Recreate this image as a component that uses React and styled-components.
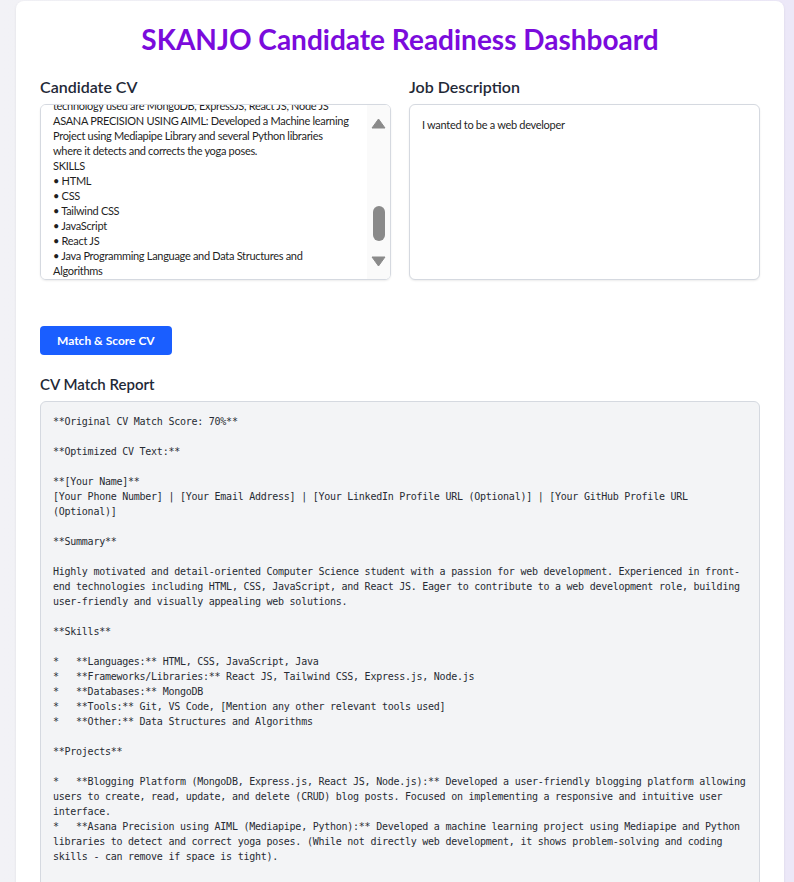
import React, { useLayoutEffect, useRef } from "react";
import styled, { createGlobalStyle } from "styled-components";

const cvText = [
  "ANANYA R",
  "Computer Science Student",
  "ananya.r@example.com",
  "+91 98765 43210",
  "Chennai, India",
  "CAREER OBJECTIVE",
  "Aspiring web developer eager to build",
  "responsive and user-friendly applications.",
  "EDUCATION",
  "B.E. Computer Science and Engineering",
  "ABC College of Engineering",
  "2021 - 2025",
  "CGPA: 8.4",
  "Higher Secondary Certificate",
  "XYZ Matriculation School",
  "Percentage: 91%",
  "INTERNSHIPS",
  "Web Development Intern - Tech Solutions",
  "Built landing pages using HTML, CSS",
  "and JavaScript for client projects.",
  "PROJECTS",
  "BLOGGING PLATFORM: Developed a blogging",
  "platform where users can create, read,",
  "update and delete their blog posts, the",
  "technology used are MongoDB, ExpressJS, React JS, Node JS",
  "ASANA PRECISION USING AIML: Developed a Machine learning",
  "Project using Mediapipe Library and several Python libraries",
  "where it detects and corrects the yoga poses.",
  "SKILLS",
  "\u2022 HTML",
  "\u2022 CSS",
  "\u2022 Tailwind CSS",
  "\u2022 JavaScript",
  "\u2022 React JS",
  "\u2022 Java Programming Language and Data Structures and",
  "Algorithms",
  "\u2022 MongoDB",
  "\u2022 Git and GitHub",
  "\u2022 VS Code",
  "LANGUAGES",
  "English, Tamil",
].join("\n");

const report = [
  "**Original CV Match Score: 70%**",
  "",
  "**Optimized CV Text:**",
  "",
  "**[Your Name]**",
  "[Your Phone Number] | [Your Email Address] | [Your LinkedIn Profile URL (Optional)] | [Your GitHub Profile URL",
  "(Optional)]",
  "",
  "**Summary**",
  "",
  "Highly motivated and detail-oriented Computer Science student with a passion for web development. Experienced in front-",
  "end technologies including HTML, CSS, JavaScript, and React JS. Eager to contribute to a web development role, building",
  "user-friendly and visually appealing web solutions.",
  "",
  "**Skills**",
  "",
  "*   **Languages:** HTML, CSS, JavaScript, Java",
  "*   **Frameworks/Libraries:** React JS, Tailwind CSS, Express.js, Node.js",
  "*   **Databases:** MongoDB",
  "*   **Tools:** Git, VS Code, [Mention any other relevant tools used]",
  "*   **Other:** Data Structures and Algorithms",
  "",
  "**Projects**",
  "",
  "*   **Blogging Platform (MongoDB, Express.js, React JS, Node.js):** Developed a user-friendly blogging platform allowing",
  "users to create, read, update, and delete (CRUD) blog posts. Focused on implementing a responsive and intuitive user",
  "interface.",
  "*   **Asana Precision using AIML (Mediapipe, Python):** Developed a machine learning project using Mediapipe and Python",
  "libraries to detect and correct yoga poses. (While not directly web development, it shows problem-solving and coding",
  "skills - can remove if space is tight).",
  "",
  "**Education**",
  "",
  "*   [Your Degree], [Your University] - [Graduation Year]",
].join("\n");

const GlobalStyle = createGlobalStyle`
  html, body {
    margin: 0;
    padding: 0;
  }
  body {
    min-height: 100vh;
    background: linear-gradient(to right, #f2f2f6, #ece8f8);
    font-family: Lato, "Open Sans", sans-serif;
  }
`;

const Page = styled.div`
  padding: 1px 0 40px 16px;
`;

const Card = styled.main`
  width: 768px;
  box-sizing: border-box;
  background: #ffffff;
  border-radius: 8px;
  box-shadow: 0 1px 3px rgba(0, 0, 0, 0.08);
  padding: 21px 24px 40px;
`;

const Title = styled.h1`
  margin: 0 0 20px;
  text-align: center;
  font-size: 28px;
  line-height: 34px;
  font-weight: 700;
  color: #7b0bdc;
`;

const InputGrid = styled.div`
  display: grid;
  grid-template-columns: 1fr 1fr;
  gap: 18px;
`;

const Field = styled.div`
  display: flex;
  flex-direction: column;
`;

const Label = styled.label`
  font-size: 16px;
  line-height: 22px;
  font-weight: 600;
  color: #1f2937;
  margin-bottom: 6px;
`;

const AreaWrap = styled.div`
  position: relative;
`;

const TextArea = styled.textarea`
  display: block;
  width: 100%;
  height: 176px;
  box-sizing: border-box;
  margin: 0;
  padding: 12px ${(p) => (p.$scroll ? "30px" : "12px")} 12px 12px;
  border: 1px solid #d5d9e0;
  border-radius: 6px;
  box-shadow: 0 1px 2px rgba(0, 0, 0, 0.08);
  resize: none;
  outline: none;
  background: #fff;
  color: #1f1f1f;
  font-family: Lato, "Open Sans", sans-serif;
  font-size: 11px;
  letter-spacing: -0.3px;
  line-height: 15px;
  overflow-y: ${(p) => (p.$scroll ? "scroll" : "auto")};
  scrollbar-width: none;
  &::-webkit-scrollbar {
    display: none;
  }
`;

const ScrollTrack = styled.div`
  position: absolute;
  top: 1px;
  right: 1px;
  bottom: 1px;
  width: 23px;
  border-radius: 0 5px 5px 0;
  background: #fafafa;
  display: flex;
  flex-direction: column;
  align-items: center;
  padding: 13px 0 12px;
  box-sizing: border-box;
`;

const Arrow = styled.svg`
  display: block;
  flex: none;
`;

const Thumb = styled.div`
  width: 12px;
  height: 35px;
  border-radius: 6px;
  background: #8a8a8a;
  margin-top: ${(p) => p.$offset}px;
`;

const Spacer = styled.div`
  flex: 1;
`;

const MatchButton = styled.button`
  margin-top: 46px;
  height: 29px;
  padding: 0 17px;
  border: none;
  border-radius: 4px;
  background: #1a5eff;
  color: #fff;
  font-family: Lato, "Open Sans", sans-serif;
  font-size: 12px;
  font-weight: 700;
  cursor: pointer;
`;

const SectionTitle = styled.h2`
  margin: 19px 0 7px;
  font-size: 15px;
  line-height: 20px;
  font-weight: 600;
  color: #1f2937;
`;

const ReportBox = styled.pre`
  margin: 0;
  padding: 12px 12px 16px;
  background: #f3f4f6;
  border: 1px solid #d5d9e0;
  border-radius: 6px;
  white-space: pre-wrap;
  font-family: "DejaVu Sans Mono", "Liberation Mono", monospace;
  font-size: 10px;
  letter-spacing: -0.25px;
  line-height: 15px;
  color: #272b33;
`;

const UpArrow = () => (
  <Arrow width="15" height="11" viewBox="0 0 15 11">
    <path d="M7.5 1 L14 10 L1 10 Z" fill="#8a8a8a" stroke="#8a8a8a" strokeLinejoin="round" />
  </Arrow>
);

const DownArrow = () => (
  <Arrow width="15" height="11" viewBox="0 0 15 11">
    <path d="M1 1 L14 1 L7.5 10 Z" fill="#8a8a8a" stroke="#8a8a8a" strokeLinejoin="round" />
  </Arrow>
);

const App = () => {
  const cvRef = useRef(null);

  useLayoutEffect(() => {
    if (cvRef.current) cvRef.current.scrollTop = 379;
  }, []);

  return (
    <>
      <GlobalStyle />
      <Page>
        <Card>
          <Title>SKANJO Candidate Readiness Dashboard</Title>

          <InputGrid>
            <Field>
              <Label>Candidate CV</Label>
              <AreaWrap>
                <TextArea ref={cvRef} $scroll defaultValue={cvText} spellCheck={false} />
                <ScrollTrack>
                  <UpArrow />
                  <Thumb $offset={77} />
                  <Spacer />
                  <DownArrow />
                </ScrollTrack>
              </AreaWrap>
            </Field>

            <Field>
              <Label>Job Description</Label>
              <TextArea defaultValue="I wanted to be a web developer" spellCheck={false} />
            </Field>
          </InputGrid>

          <MatchButton>Match &amp; Score CV</MatchButton>

          <SectionTitle>CV Match Report</SectionTitle>
          <ReportBox>{report}</ReportBox>
        </Card>
      </Page>
    </>
  );
};

export default App;
